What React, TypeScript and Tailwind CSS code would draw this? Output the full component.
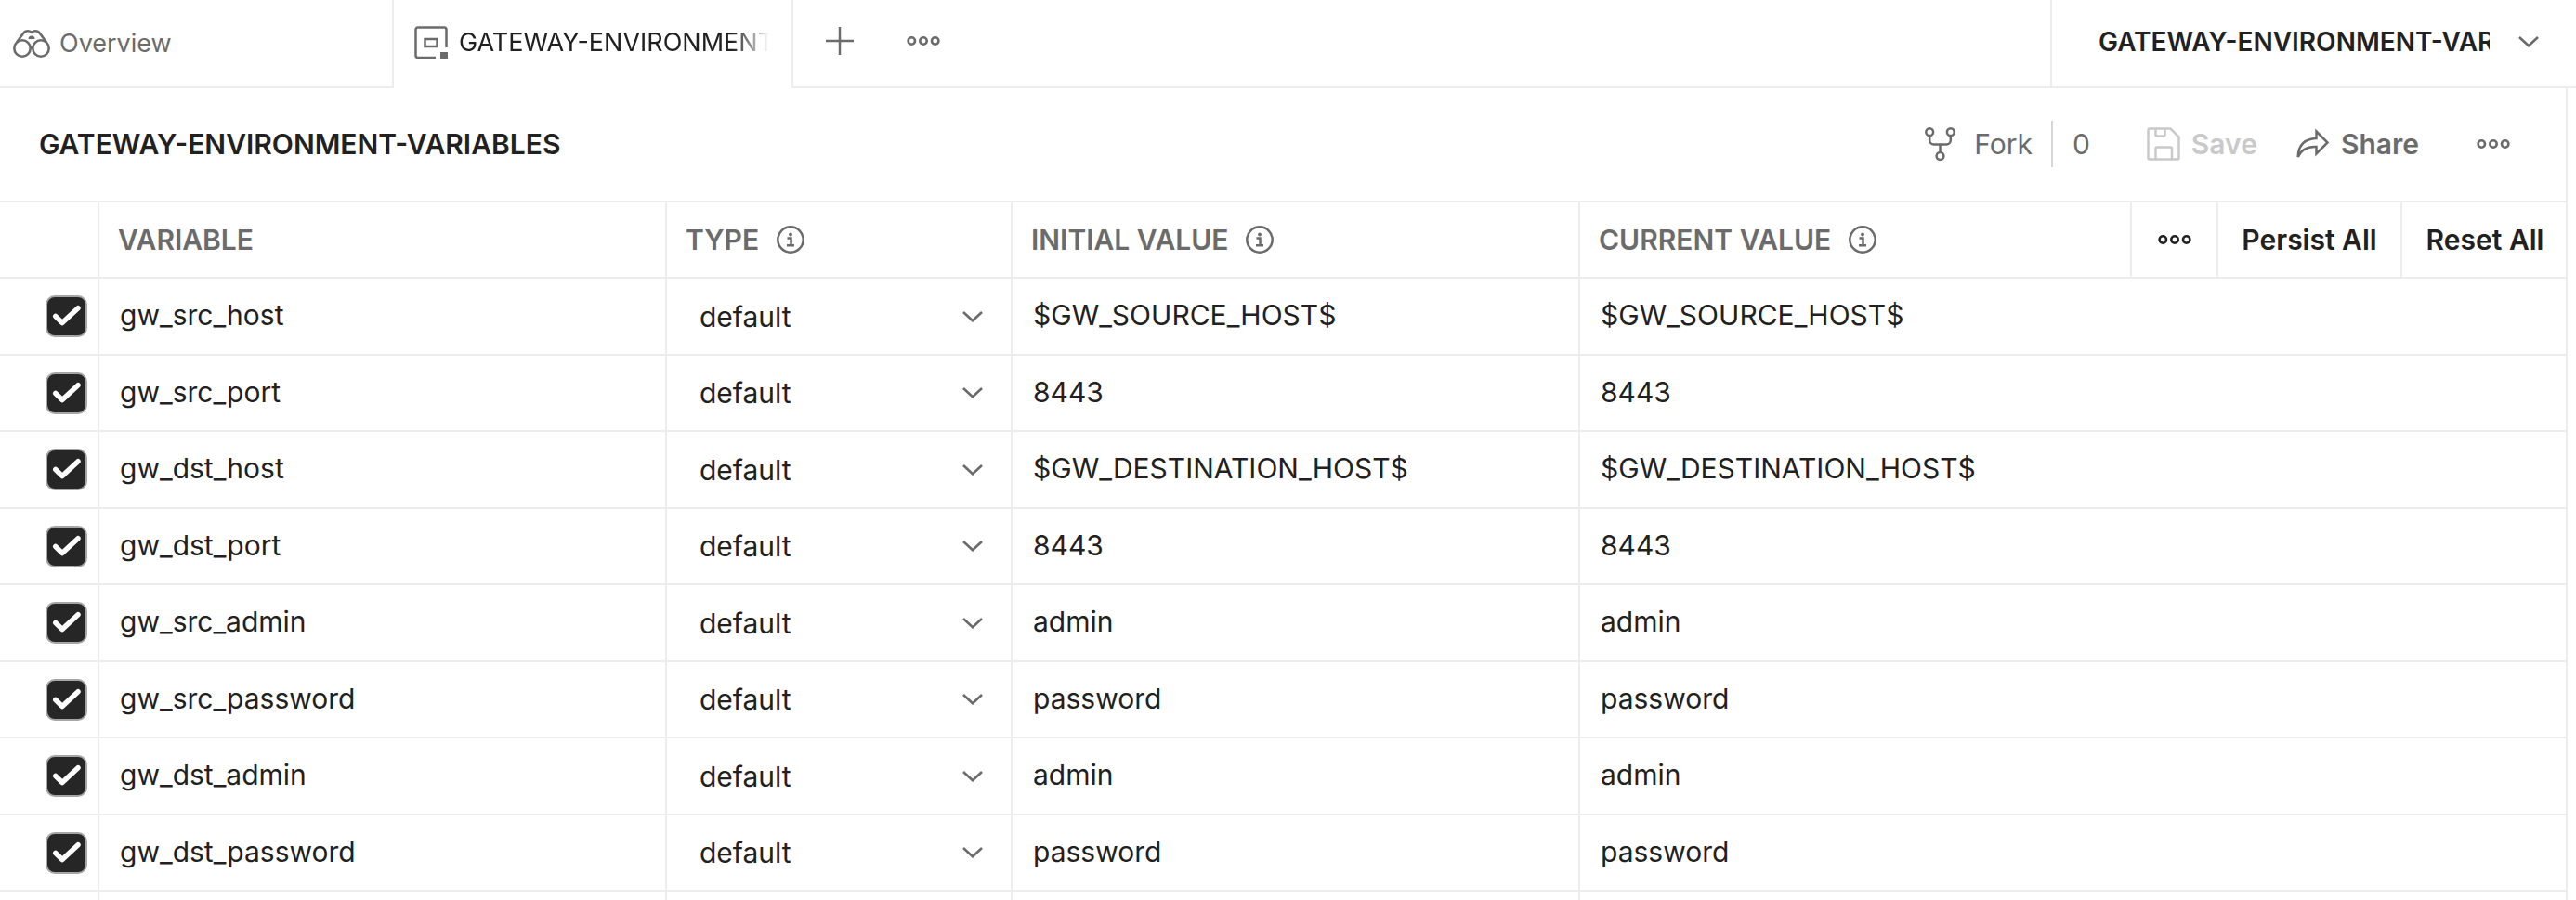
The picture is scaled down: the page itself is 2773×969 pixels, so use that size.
import { useState } from "react";

const rows = [
  { name: "gw_src_host", value: "$GW_SOURCE_HOST$" },
  { name: "gw_src_port", value: "8443" },
  { name: "gw_dst_host", value: "$GW_DESTINATION_HOST$" },
  { name: "gw_dst_port", value: "8443" },
  { name: "gw_src_admin", value: "admin" },
  { name: "gw_src_password", value: "password" },
  { name: "gw_dst_admin", value: "admin" },
  { name: "gw_dst_password", value: "password" },
];

function Binoculars() {
  return (
    <svg className="h-[30px] w-10 shrink-0" viewBox="0 0 40 30" fill="none" stroke="currentColor" strokeWidth="2.6" aria-hidden="true">
      <circle cx="10" cy="20" r="8.7" />
      <circle cx="30" cy="20" r="8.7" />
      <path d="M4 13.500 11 4C12.500 1.800 14 1.300 16 1.300c1.500 0 2.500.3 4 1.500C21.500 1.600 22.500 1.300 24 1.300c2 0 3.500.5 5 2.700L36 13.500M18.500 19.500q1.500-1 3 0" />
      <path d="M16.500 10a3.500 3.500 0 0 1 7 0z" fill="currentColor" stroke="none" />
    </svg>
  );
}

function EnvironmentIcon() {
  return (
    <svg className="size-9 shrink-0" viewBox="0 0 36 36" fill="none" stroke="currentColor" strokeWidth="2.500" aria-hidden="true">
      <path d="M23 34H4A2.500 2.500 0 0 1 1.500 31.500V4A2.500 2.500 0 0 1 4 1.500h28A2.500 2.500 0 0 1 34.500 4v19" />
      <rect x="11.500" y="14" width="13" height="8" />
      <rect x="28" y="28" width="8" height="7.500" fill="currentColor" stroke="none" />
    </svg>
  );
}

function Dots() {
  return (
    <svg className="h-[10px] w-9 shrink-0" viewBox="0 0 36 10" fill="none" stroke="currentColor" strokeWidth="2.600" aria-hidden="true">
      <circle cx="5.300" cy="5" r="3.700" />
      <circle cx="18" cy="5" r="3.700" />
      <circle cx="30.700" cy="5" r="3.700" />
    </svg>
  );
}

function Chevron() {
  return (
    <svg className="h-3 w-6 shrink-0" viewBox="0 0 24 12" fill="none" stroke="currentColor" strokeWidth="2.600" aria-hidden="true">
      <path d="M2 1 12 10.300 22 1" />
    </svg>
  );
}

function Info() {
  return (
    <svg className="size-[30px] shrink-0" viewBox="0 0 30 30" fill="none" stroke="currentColor" strokeWidth="2.500" aria-hidden="true">
      <circle cx="15" cy="15" r="13.700" />
      <path d="M11.500 13.500H15.500V21.300M11 21.300h8" />
      <circle cx="15" cy="9.500" r="1.900" fill="currentColor" stroke="none" />
    </svg>
  );
}

function ForkIcon() {
  return (
    <svg className="h-9 w-[33px] shrink-0" viewBox="0 0 33 36" fill="none" stroke="currentColor" strokeWidth="2.500" aria-hidden="true">
      <circle cx="5.200" cy="5.200" r="3.900" />
      <circle cx="27.800" cy="5.200" r="3.900" />
      <circle cx="16.500" cy="31" r="3.900" />
      <path d="M5.200 9V14a4.500 4.500 0 0 0 4.500 4.500h13.600a4.500 4.500 0 0 0 4.500-4.500V9M16.500 18.500V27" />
    </svg>
  );
}

function SaveIcon() {
  return (
    <svg className="size-9 shrink-0" viewBox="0 0 36 36" fill="none" stroke="currentColor" strokeWidth="2.500" aria-hidden="true">
      <path d="M3 1.500H25.500L34.500 10.500V33a1.500 1.500 0 0 1-1.500 1.500H3A1.500 1.500 0 0 1 1.500 33V3A1.500 1.500 0 0 1 3 1.500Z" />
      <path d="M9.500 1.500V8A1.500 1.500 0 0 0 11 9.500h7A1.500 1.500 0 0 0 19.500 8V1.500M9.500 34.500V23a1.500 1.500 0 0 1 1.500-1.500h14.500A1.500 1.500 0 0 1 27 23V34.500" />
    </svg>
  );
}

function ShareIcon() {
  return (
    <svg className="h-[34px] w-9 shrink-0" viewBox="0 0 36 34" fill="none" stroke="currentColor" strokeWidth="2.500" aria-hidden="true">
      <path d="M21.500 3.500 33.500 15.500 21.500 27.500V20C13 19.500 6 21.500 1.700 31 2 18.500 9 11.500 21.500 11Z" />
    </svg>
  );
}

const head = "h-[82px] border-b-2 border-r-2 border-[#ededed] p-0 text-left font-semibold text-[#6b6b6b]";
const cell = "border-b-2 border-r-2 border-[#ededed] p-0";
const field = "block w-full bg-transparent pb-[3px] pl-[22px] text-[30px] leading-9 text-[#212121] outline-none";

export default function App() {
  const [checked, setChecked] = useState(rows.map(() => true));

  return (
    <div className="flex h-screen flex-col overflow-hidden bg-white font-['Inter',sans-serif] text-[30px] leading-9 text-[#212121]">
      <header className="flex h-[95px] shrink-0 text-[28px]">
        <a href="#overview" className="flex w-[424px] shrink-0 items-center gap-[10px] border-b-2 border-r-2 border-[#ededed] pl-[14px] text-[27px] text-[#6b6b6b]">
          <Binoculars />
          Overview
        </a>
        <a href="#environment" className="flex w-[430px] shrink-0 items-center gap-3 border-r-2 border-[#ededed] pb-1 pl-[22px] pr-6 text-[27px]">
          <span className="text-[#6b6b6b]"><EnvironmentIcon /></span>
          <span className="min-w-0 flex-1 overflow-hidden whitespace-nowrap [mask-image:linear-gradient(to_right,black_88%,transparent)]">
            GATEWAY-ENVIRONMENT-VARIABLES
          </span>
        </a>
        <div className="flex min-w-0 flex-1 items-center gap-14 border-b-2 border-[#ededed] pb-[5px] pl-[34px] text-[#6b6b6b]">
          <button type="button" aria-label="New tab">
            <svg className="size-8" viewBox="0 0 32 32" fill="none" stroke="currentColor" strokeWidth="2.500" aria-hidden="true">
              <path d="M16 1v30M1 16h30" />
            </svg>
          </button>
          <button type="button" aria-label="Tab options"><Dots /></button>
        </div>
        <button type="button" className="flex w-[566px] shrink-0 items-center gap-[30px] border-b-2 border-l-2 border-[#ededed] pb-1 pl-[50px] pr-[39px] text-left font-semibold">
          <span className="min-w-0 flex-1 overflow-hidden whitespace-nowrap">GATEWAY-ENVIRONMENT-VARIABLES</span>
          <span className="text-[#6b6b6b]"><Chevron /></span>
        </button>
      </header>

      <main className="mr-[9px] min-h-0 flex-1 overflow-hidden border-r-2 border-[#ededed]">
        <div className="flex h-[123px] items-center border-b-2 border-[#ededed] pb-0.5 pl-[42px] pr-[60px] text-[#6b6b6b]">
          <h1 className="min-w-0 flex-1 font-semibold text-[#212121]">GATEWAY-ENVIRONMENT-VARIABLES</h1>
          <button type="button" className="flex items-center gap-5 pr-5">
            <ForkIcon />
            Fork
          </button>
          <span className="h-[50px] border-l-2 border-[#d6d6d6] pl-[21px] leading-[50px]">0</span>
          <button type="button" disabled className="ml-[61px] flex items-center gap-3 font-semibold text-[#c9c9c9]">
            <SaveIcon />
            Save
          </button>
          <button type="button" className="ml-[42px] flex items-center gap-3 font-semibold">
            <ShareIcon />
            Share
          </button>
          <button type="button" aria-label="More actions" className="ml-[62px]"><Dots /></button>
        </div>

        <table className="w-full table-fixed border-separate border-spacing-0">
          <colgroup>
            <col className="w-[107px]" />
            <col className="w-[611px]" />
            <col className="w-[372px]" />
            <col className="w-[611px]" />
            <col />
          </colgroup>
          <thead>
            <tr>
              <td className={head} />
              <th scope="col" className={head}><div className="pl-5">VARIABLE</div></th>
              <th scope="col" className={head}><div className="flex items-center gap-[19px] pl-5">TYPE<Info /></div></th>
              <th scope="col" className={head}><div className="flex items-center gap-[19px] pl-5">INITIAL VALUE<Info /></div></th>
              <th scope="col" className="h-[82px] border-b-2 border-[#ededed] p-0 text-left font-semibold text-[#6b6b6b]">
                <div className="flex h-20 items-stretch">
                  <div className="flex flex-1 items-center gap-[19px] pl-5">CURRENT VALUE<Info /></div>
                  <button type="button" aria-label="Column options" className="flex w-[93px] items-center justify-center border-l-2 border-[#ededed] text-[#212121]"><Dots /></button>
                  <button type="button" className="w-[198px] border-l-2 border-[#ededed] text-[#212121]">Persist All</button>
                  <button type="button" className="w-[178px] border-l-2 border-[#ededed] pl-0.5 text-[#212121]">Reset All</button>
                </div>
              </th>
            </tr>
          </thead>
          <tbody>
            {rows.map((row, i) => (
              <tr key={row.name} className="odd:h-[83px] even:h-[82px]">
                <td className={cell}>
                  <label className="relative ml-[49px] block size-[45px]">
                    <input
                      type="checkbox"
                      aria-label={"Enable " + row.name}
                      checked={checked[i]}
                      onChange={() => setChecked(checked.map((c, j) => (j === i ? !c : c)))}
                      className="peer block size-[45px] appearance-none rounded-[10px] border-2 border-[#a6a6a6] bg-white checked:bg-[#262626]"
                    />
                    <svg className="pointer-events-none absolute inset-0 hidden size-[45px] peer-checked:block" viewBox="0 0 45 45" fill="none" stroke="white" strokeWidth="5.500" strokeLinecap="round" strokeLinejoin="round" aria-hidden="true">
                      <path d="M10.800 22.500 18 29.500 35 13.700" />
                    </svg>
                  </label>
                </td>
                <td className={cell}><input className={field} aria-label="Variable" defaultValue={row.name} /></td>
                <td className={cell}>
                  <div className="relative flex items-center">
                    <select aria-label={"Type of " + row.name} className="w-full appearance-none bg-transparent pl-[35px] leading-9 outline-none">
                      <option>default</option>
                      <option>secret</option>
                    </select>
                    <span className="pointer-events-none absolute right-[29px] text-[#6b6b6b]"><Chevron /></span>
                  </div>
                </td>
                <td className={cell}><input className={field} aria-label="Initial value" defaultValue={row.value} /></td>
                <td className="border-b-2 border-[#ededed] p-0"><input className={field} aria-label="Current value" defaultValue={row.value} /></td>
              </tr>
            ))}
            <tr className="h-[83px]">
              <td className={cell} />
              <td className={cell} />
              <td className={cell} />
              <td className={cell} />
              <td className="border-b-2 border-[#ededed] p-0" />
            </tr>
          </tbody>
        </table>
      </main>
    </div>
  );
}
